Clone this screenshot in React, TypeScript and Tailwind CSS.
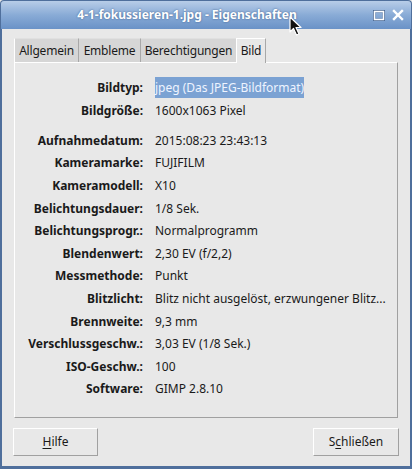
import React from "react";

const rows: { label: string; value: string; gapBefore?: boolean; selected?: boolean }[] = [
  { label: "Bildtyp:", value: "jpeg (Das JPEG-Bildformat)", selected: true },
  { label: "Bildgröße:", value: "1600x1063 Pixel" },
  { label: "Aufnahmedatum:", value: "2015:08:23 23:43:13", gapBefore: true },
  { label: "Kameramarke:", value: "FUJIFILM" },
  { label: "Kameramodell:", value: "X10" },
  { label: "Belichtungsdauer:", value: "1/8 Sek." },
  { label: "Belichtungsprogr.:", value: "Normalprogramm" },
  { label: "Blendenwert:", value: "2,30 EV (f/2,2)" },
  { label: "Messmethode:", value: "Punkt" },
  { label: "Blitzlicht:", value: "Blitz nicht ausgelöst, erzwungener Blitz..." },
  { label: "Brennweite:", value: "9,3 mm" },
  { label: "Verschlussgeschw.:", value: "3,03 EV (1/8 Sek.)" },
  { label: "ISO-Geschw.:", value: "100" },
  { label: "Software:", value: "GIMP 2.8.10" },
];

export default function App() {
  return (
    <div
      className="relative w-[412px] h-[469px] flex flex-col bg-[#e8e8e8] text-[12px] text-[#1a1a1a] overflow-hidden"
      style={{ fontFamily: '"Noto Sans", "Open Sans", sans-serif' }}
    >
      {/* Title bar */}
      <div className="h-[29px] shrink-0 flex items-center rounded-t-[4px] border-t border-x border-[#4f6f9c] bg-gradient-to-b from-[#b8cde8] via-[#89abd6] to-[#6a92c7]">
        <div className="flex-1 text-center pl-[12px] text-[12px] font-bold text-white [text-shadow:0_0_2px_#3a5a88]">
          4-1-fokussieren-1.jpg - Eigenschaften
        </div>
        <div className="w-[50px] flex items-center gap-[7px] pl-[12px]">
          <svg width="12" height="11" viewBox="0 0 12 11">
            <rect x="1" y="1" width="10" height="9" fill="none" stroke="#3f5f8c" strokeWidth="3" />
            <rect x="1.5" y="1.5" width="9" height="8" fill="none" stroke="#ffffff" strokeWidth="1.6" />
          </svg>
          <svg width="12" height="12" viewBox="0 0 12 12">
            <path d="M2 2 L10 10 M10 2 L2 10" stroke="#ffffff" strokeWidth="2.4" strokeLinecap="square" />
          </svg>
        </div>
      </div>

      {/* Body */}
      <div className="flex-1 flex flex-col border-x-2 border-b-[3px] border-[#4f6f9c] px-[11px]">
        {/* Tabs */}
        <div className="mt-[8px] ml-[1px] flex items-end h-[25px] text-[12px] tracking-[-0.2px]">
          <div className="w-[65px] h-[24px] flex items-center justify-center bg-[#d6d6d6] border-l border-l-[#ffffff] border-r border-r-[#a8a8a8] border-t border-t-[#e0e0e0]">
            Allgemein
          </div>
          <div className="w-[62px] h-[24px] flex items-center justify-center bg-[#d6d6d6] border-r border-r-[#a8a8a8] border-t border-t-[#e0e0e0]">
            Embleme
          </div>
          <div className="w-[95px] h-[24px] flex items-center justify-center bg-[#d6d6d6] border-t border-t-[#e0e0e0]">
            Berechtigungen
          </div>
          <div className="w-[30px] h-[25px] flex items-center justify-center bg-[#e8e8e8] border-l border-t border-[#ffffff] border-r border-r-[#a8a8a8] relative -mb-px z-10">
            Bild
          </div>
        </div>

        {/* Panel */}
        <div className="ml-[1px] w-[384px] h-[356px] border-l border-t border-[#ffffff] border-r border-b border-r-[#a0a0a0] border-b-[#a0a0a0] pt-[14px]">
          {rows.map((r) => (
            <div
              key={r.label}
              className={`flex items-center h-[22.6px] ${r.gapBefore ? "mt-[7.4px]" : ""}`}
            >
              <div className="w-[128px] text-right font-bold">{r.label}</div>
              <div className="ml-[12px] whitespace-nowrap">
                {r.selected ? (
                  <span className="bg-[#7ba2d3] text-[#eef4ff] py-[2px]">{r.value}</span>
                ) : (
                  r.value
                )}
              </div>
            </div>
          ))}
        </div>

        {/* Buttons */}
        <div className="mt-[10px] flex justify-between">
          <button className="w-[85px] h-[28px] border border-t-[#ffffff] border-l-[#ffffff] border-r-[#a0a0a0] border-b-[#a0a0a0] bg-[#e8e8e8]">
            <span className="underline underline-offset-2">H</span>ilfe
          </button>
          <button className="w-[86px] h-[28px] border border-t-[#ffffff] border-l-[#ffffff] border-r-[#a0a0a0] border-b-[#a0a0a0] bg-[#e8e8e8]">
            S<span className="underline underline-offset-2">c</span>hließen
          </button>
        </div>
      </div>

      {/* Mouse cursor */}
      <svg className="absolute left-[289px] top-[16px]" width="14" height="21" viewBox="0 0 14 21">
        <path d="M1 1 L1 16 L4.5 12.5 L7.5 19 L10 18 L7 11.5 L12 11.5 Z" fill="#111111" stroke="#ffffff" strokeWidth="1.2" strokeLinejoin="round" />
      </svg>
    </div>
  );
}
